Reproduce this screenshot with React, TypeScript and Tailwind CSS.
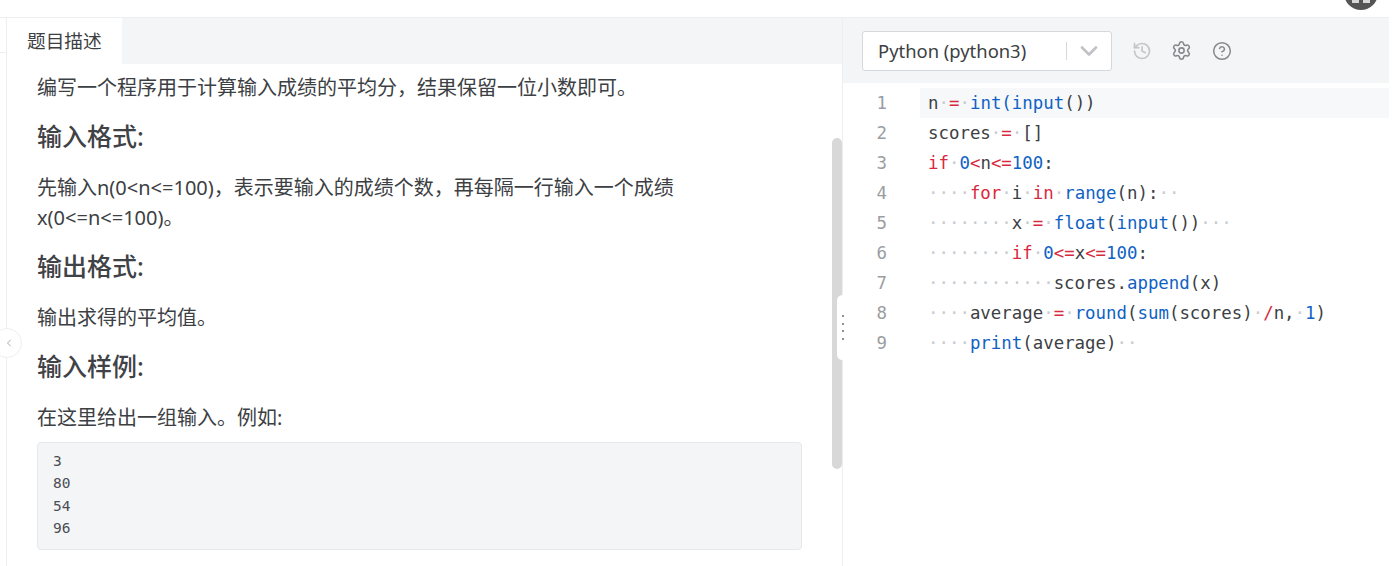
import { ChevronDown, ChevronLeft, CircleHelp, History, Settings } from "lucide-react";

type Tok = [string, string?];

const KW = "text-[#d9293e]";
const FN = "text-[#0f62c4]";
const DOT = "text-[#c9ccd0]";

const d = (n: number): Tok => ["·".repeat(n), DOT];

const codeLines: Tok[][] = [
  [["n"], d(1), ["=", KW], d(1), ["int(input", FN], ["())"]],
  [["scores"], d(1), ["=", KW], d(1), ["[]"]],
  [["if", KW], d(1), ["0", FN], ["<", KW], ["n"], ["<=", KW], ["100", FN], [":"]],
  [d(4), ["for", KW], d(1), ["i"], d(1), ["in", KW], d(1), ["range", FN], ["(n):"], d(2)],
  [d(8), ["x"], d(1), ["=", KW], d(1), ["float", FN], ["("], ["input", FN], ["())"], d(3)],
  [d(8), ["if", KW], d(1), ["0", FN], ["<=", KW], ["x"], ["<=", KW], ["100", FN], [":"]],
  [d(12), ["scores."], ["append", FN], ["(x)"]],
  [d(4), ["average"], d(1), ["=", KW], d(1), ["round", FN], ["("], ["sum", FN], ["(scores)"], d(1), ["/", KW], ["n,"], d(1), ["1", FN], [")"]],
  [d(4), ["print", FN], ["(average)"], d(2)],
];

function Heading({ children }: { children: string }) {
  return <h2 className="mt-4 mb-[19px] text-[25px] leading-[35px] font-medium text-[#3f4246]">{children}</h2>;
}

export default function App() {
  return (
    <div className="relative h-[566px] w-[1397px] overflow-hidden bg-white font-['Noto_Sans','Noto_Sans_CJK_SC',sans-serif] text-[#3c4043]">
      {/* avatar cut off at the top */}
      <div className="absolute top-[-24px] left-[1344px] flex h-[34px] w-[34px] items-end justify-center gap-1 rounded-full bg-[#555555] pb-[7px]">
        <span className="h-[3px] w-[7px] bg-[#d8d8d8]" />
        <span className="h-[3px] w-[7px] bg-[#d8d8d8]" />
      </div>

      <div className="h-[18px] w-[1389px] border-b border-[#eceef0]" />

      <div className="flex h-[548px] w-[1389px]">
        {/* left rail */}
        <div className="w-[7px] shrink-0 border-r border-[#eceef0]">
          <div className="mt-[34px] h-px w-[6px] bg-[#eceef0]" />
        </div>

        {/* problem panel */}
        <div className="w-[835px] shrink-0 overflow-hidden">
          <div className="h-[46px] bg-[#f4f5f7]">
            <div className="flex h-[46px] w-[115px] items-center bg-white pl-5 text-[18.7px]">题目描述</div>
          </div>
          <div className="pt-[9px] pr-10 pl-[30px] text-[20px] leading-[30px]">
            <p>编写一个程序用于计算输入成绩的平均分，结果保留一位小数即可。</p>
            <Heading>输入格式:</Heading>
            <p>先输入n(0&lt;n&lt;=100)，表示要输入的成绩个数，再每隔一行输入一个成绩x(0&lt;=n&lt;=100)。</p>
            <Heading>输出格式:</Heading>
            <p>输出求得的平均值。</p>
            <Heading>输入样例:</Heading>
            <p>在这里给出一组输入。例如:</p>
            <pre className="mt-[9px] h-[108px] rounded border border-[#e6e8eb] bg-[#f4f5f7] px-[15px] pt-[7px] font-['DejaVu_Sans_Mono',monospace] text-[14.5px] leading-[22.4px] text-[#4a4d52]">
              {"3\n80\n54\n96"}
            </pre>
          </div>
        </div>

        {/* editor panel */}
        <div className="min-w-0 flex-1 border-l border-[#eceef0]">
          <div className="flex h-[65px] items-center bg-[#f4f5f7] pl-[19px]">
            <div className="flex h-10 w-[250px] items-center rounded-[3px] border border-[#d5d8dc] bg-white pl-[15px] text-[18.4px]">
              <span className="flex-1">Python (python3)</span>
              <span className="h-[18px] w-px bg-[#d5d8dc]" />
              <ChevronDown className="mr-2 ml-[8px] text-[#c0c2c5]" size={28} strokeWidth={2.3} />
            </div>
            <History className="ml-5 text-[#c4c6c9]" size={20} strokeWidth={2} />
            <Settings className="ml-[19px] text-[#85888c]" size={21} strokeWidth={1.8} />
            <CircleHelp className="ml-[20px] text-[#85888c]" size={20} strokeWidth={1.8} />
          </div>
          <div className="pt-[5px] font-['DejaVu_Sans_Mono',monospace] text-[17.4px] leading-[30px]">
            {codeLines.map((line, i) => (
              <div key={i} className="flex h-[30px]">
                <div className="w-[44px] shrink-0 text-right text-[#9a9da1]">{i + 1}</div>
                <div className={`ml-[33px] min-w-0 flex-1 pl-2 whitespace-pre ${i === 0 ? "bg-[#f7f8fa]" : ""}`}>
                  {line.map(([t, c], j) => (
                    <span key={j} className={c}>{t}</span>
                  ))}
                </div>
              </div>
            ))}
          </div>
        </div>
      </div>

      {/* overlays */}
      <div className="absolute top-[138px] left-[832px] h-[331px] w-[10px] rounded-full bg-[#d8d8d8]" />
      <div className="absolute top-[295px] left-[837px] flex h-[65px] w-[11px] flex-col items-center justify-center gap-[5.5px] rounded-md bg-white">
        {[0, 1, 2, 3].map((n) => (
          <span key={n} className="h-[2px] w-[2px] bg-[#8d8f92]" />
        ))}
      </div>
      <div className="absolute top-[328px] left-[-8px] flex h-[30px] w-[30px] items-center justify-center rounded-full border border-[#eceef0] bg-white pl-[3px]">
        <ChevronLeft className="text-[#a9abae]" size={12} />
      </div>
    </div>
  );
}
